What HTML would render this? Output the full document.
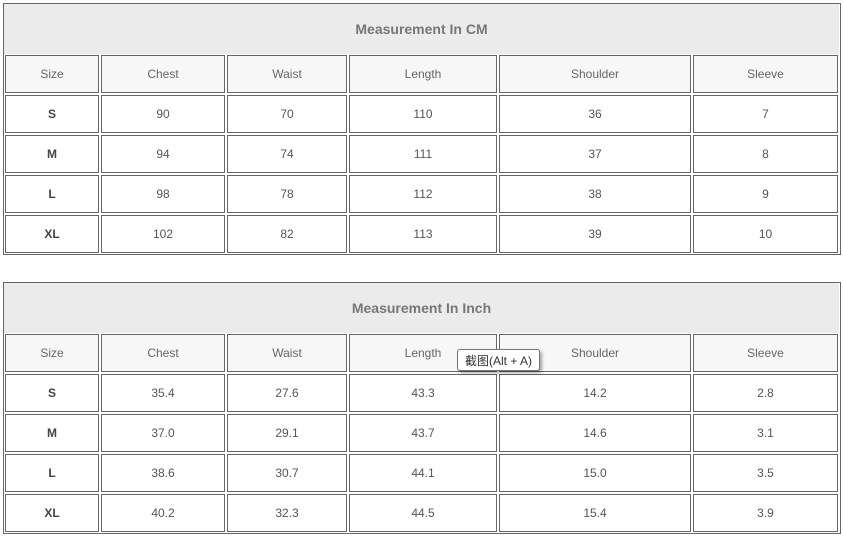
<!DOCTYPE html>
<html><head><meta charset="utf-8"><style>
body{margin:0;background:#fff;width:843px;height:538px;position:relative;overflow:hidden;font-family:"Liberation Sans",Arial,sans-serif;}
.box{position:absolute;border:1px solid #666;box-sizing:border-box;}
.t{position:absolute;background:#ebebeb;color:#777;font-weight:bold;font-size:14px;display:flex;align-items:center;justify-content:center;}
.c{position:absolute;border:1px solid #666;box-sizing:border-box;display:flex;align-items:center;justify-content:center;font-size:12px;color:#555;background:#fff;}
.h{background:#f7f7f7;color:#666;}
.b{font-weight:bold;color:#444;}
.tip{position:absolute;left:457px;top:349px;width:83px;height:22px;box-sizing:border-box;border:1px solid #777;background:#fff;border-radius:3px;box-shadow:2px 2px 3px rgba(0,0,0,.35);font-size:12px;color:#333;display:flex;align-items:center;justify-content:center;font-family:"Liberation Sans","Noto Sans CJK SC",sans-serif;}
</style></head><body>
<div id="root"></div>
<script>
var cols=[[5,99],[101,225],[227,347],[349,497],[499,691],[693,838]];
function table(top,title,data){
  var h='<div class="box" style="left:3px;top:'+top+'px;width:838px;height:252px"></div>';
  h+='<div class="t" style="left:4px;top:'+(top+1)+'px;width:835px;height:50px">'+title+'</div>';
  var rows=[];for(var i=0;i<5;i++)rows.push([top+52+i*40,top+90+i*40]);
  for(var r=0;r<5;r++)for(var c=0;c<6;c++){
    var cls='c'+(r==0?' h':'')+(r>0&&c==0?' b':'');
    h+='<div class="'+cls+'" style="left:'+cols[c][0]+'px;top:'+rows[r][0]+'px;width:'+(cols[c][1]-cols[c][0])+'px;height:'+(rows[r][1]-rows[r][0])+'px">'+data[r][c]+'</div>';
  }
  return h;
}
var hd=['Size','Chest','Waist','Length','Shoulder','Sleeve'];
var h=table(3,'Measurement In CM',[hd,['S',90,70,110,36,7],['M',94,74,111,37,8],['L',98,78,112,38,9],['XL',102,82,113,39,10]]);
h+=table(282,'Measurement In Inch',[hd,['S','35.4','27.6','43.3','14.2','2.8'],['M','37.0','29.1','43.7','14.6','3.1'],['L','38.6','30.7','44.1','15.0','3.5'],['XL','40.2','32.3','44.5','15.4','3.9']]);
h+='<div class="tip">截图(Alt + A)</div>';
document.getElementById('root').innerHTML=h;
</script>
</body></html>
